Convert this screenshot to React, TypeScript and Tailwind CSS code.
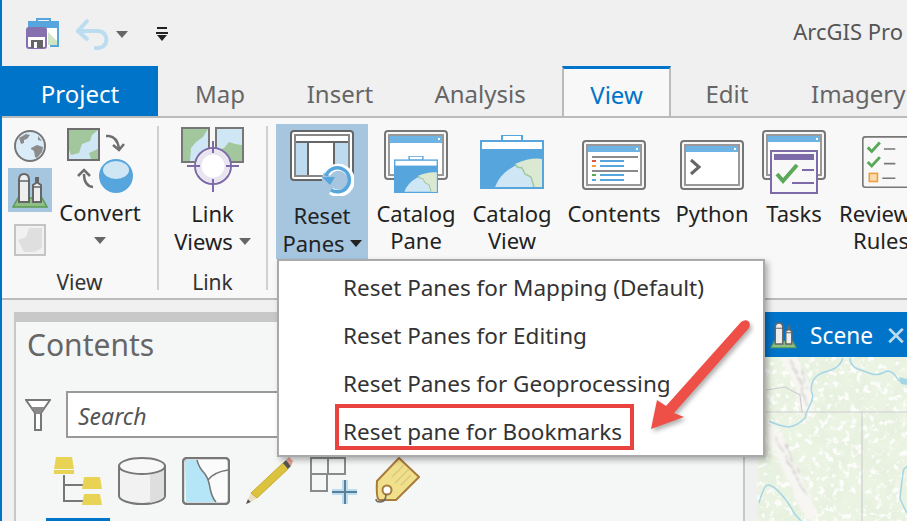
import React from 'react';

const FONT = "font-['Noto_Sans','Open_Sans',sans-serif]";

const tabs = [
  { label: 'Map', w: 'w-[124px]' },
  { label: 'Insert', w: 'w-[116px]' },
  { label: 'Analysis', w: 'w-[164px]' },
];

const menuItems = ['Reset Panes for Mapping (Default)', 'Reset Panes for Editing', 'Reset Panes for Geoprocessing'];

const Caret = ({ className = '' }: { className?: string }) => (
  <svg width="12" height="7" viewBox="0 0 12 7" className={className}>
    <path d="M0 0h12L6 7z" fill="currentColor" />
  </svg>
);

const SaveIcon = () => (
  <svg width="34" height="32" viewBox="0 0 34 32">
    <path d="M2 5h30v24H18z" fill="#fff" />
    <path d="M11 4V1h13v3M2 4h30v24H24" fill="none" stroke="#56a5dc" strokeWidth="2" />
    <path d="M2 5h30v5H2z" fill="#56a5dc" />
    <path d="M22 14l9 9v4h-9z" fill="#cfe6c5" />
    <rect x="1" y="10" width="19" height="20" rx="2" fill="#fff" stroke="#8471ad" strokeWidth="2" />
    <path d="M2 11h17v8H2z" fill="#8471ad" />
    <path d="M5 22h12v8H5z" fill="#666" />
    <path d="M8 24h3v6H8z" fill="#fff" />
  </svg>
);

const UndoIcon = () => (
  <svg width="34" height="32" viewBox="0 0 34 32" fill="none">
    <path d="M2 13h20a8.500 8.500 0 0 1 0 17h-4" stroke="#bcdcf0" strokeWidth="4" />
    <path d="M12 2L2 13l10 9" stroke="#bcdcf0" strokeWidth="4" />
  </svg>
);

const QuickAccess = () => (
  <svg width="12" height="14" viewBox="0 0 12 14">
    <path d="M1 0h10v2H1zM0 5h12v2H0z" fill="#222" />
    <path d="M1 8h10l-5 6z" fill="#222" />
  </svg>
);

const GlobeIcon = () => (
  <svg width="32" height="32" viewBox="0 0 32 32">
    <circle cx="16" cy="16" r="15" fill="#d9ecf8" stroke="#777" strokeWidth="2" />
    <path d="M5 8l7-4 4 1-3 4-3 1v3l-3 1zM17 18l6-3 6 2-1 5-5 6-2-1-1-6-3-2zM24 6l4 5-4-1z" fill="#8c8c8c" />
  </svg>
);

const SceneIcon = ({ size = 36 }: { size?: number }) => (
  <svg width={size} height={size} viewBox="0 0 36 36">
    <path d="M6 26h24l5 9H1z" fill="#8fbf84" stroke="#5b9a52" strokeWidth="1.500" />
    <path d="M7 30V8q0-6 5-6t5 6v22z" fill="#eee" stroke="#666" strokeWidth="2" />
    <path d="M21 30V13l3-2V6h2v5l3 2v17z" fill="#eee" stroke="#666" strokeWidth="2" />
    <path d="M7 9h10M21 15h8" stroke="#666" strokeWidth="1.500" />
  </svg>
);

const FlatMapIcon = () => (
  <svg width="32" height="32" viewBox="0 0 32 32">
    <rect x="1" y="1" width="30" height="30" fill="#f1f1f1" stroke="#c4c4c4" strokeWidth="2" />
    <path d="M4 16l8-3 3-9h13v20l-8 4H10z" fill="#dfdfdf" />
  </svg>
);

const ConvertIcon = () => (
  <svg width="66" height="66" viewBox="0 0 66 66" fill="none">
    <rect x="1" y="1" width="31" height="31" fill="#cfe6f5" stroke="#6e6e6e" strokeWidth="2" />
    <path d="M2 2h29l-6 5-2 6-8 3-3 9-8 2-2-5z" fill="#a3c79c" />
    <path d="M24 31l-2-6 9-4v10z" fill="#a3c79c" />
    <path d="M39 8h3q8 1 10 12M46 17l6 5 5-6" stroke="#6e6e6e" strokeWidth="2.500" />
    <path d="M26 59q-9-1-9-13M11 48l6-6 6 6" stroke="#6e6e6e" strokeWidth="2.500" />
    <ellipse cx="49" cy="48" rx="17" ry="17" fill="#56a5dc" />
    <ellipse cx="49" cy="42" rx="13" ry="9" fill="#cfe6f5" />
  </svg>
);

const LinkIcon = () => (
  <svg width="64" height="66" viewBox="0 0 64 66" fill="none">
    <rect x="1" y="1" width="27" height="34" fill="#cfe6f5" stroke="#777" strokeWidth="2" />
    <path d="M2 2h25l-5 8-7 5-5 6-1 13H2z" fill="#a3c79c" />
    <rect x="35" y="1" width="27" height="34" fill="#cfe6f5" stroke="#777" strokeWidth="2" />
    <path d="M36 34V23l7-2 5-6 6 2 7 1v16z" fill="#a3c79c" />
    <circle cx="32" cy="39" r="18" fill="#fff" stroke="#7d6aa8" strokeWidth="2" />
    <circle cx="32" cy="39" r="14" fill="none" stroke="#e8e4f0" strokeWidth="5" />
    <path d="M32 14v12M32 52v13M6 39h13M45 39h13" stroke="#7d6aa8" strokeWidth="2" />
  </svg>
);

const ResetPanesIcon = () => (
  <svg width="64" height="66" viewBox="0 0 64 66" fill="none">
    <rect x="1" y="1" width="62" height="49" rx="3" fill="#fff" stroke="#666" strokeWidth="2" />
    <rect x="5" y="5" width="54" height="41" fill="#fff" stroke="#888" strokeWidth="2" />
    <path d="M6 13h12v32H6zM44 13h14v32H44z" fill="#bddaef" />
    <path d="M6 12h52M18 13v32M44 13v32" stroke="#666" strokeWidth="2" />
    <circle cx="48" cy="50" r="16" fill="#a6c6e0" />
    <path d="M37 44a13 13 0 1 1 4 17" stroke="#fff" strokeWidth="7" />
    <path d="M36 46a12 12 0 1 1 5 14" stroke="#56a5dc" strokeWidth="3.500" />
    <path d="M32 47h13l-5 8z" fill="#56a5dc" />
  </svg>
);

const Folder = ({ x, y, w, h }: { x: number; y: number; w: number; h: number }) => (
  <svg x={x} y={y} width={w} height={h} viewBox="0 0 64 54" preserveAspectRatio="none">
    <path d="M22 0h20v6H22z" fill="#fff" stroke="#56a5dc" strokeWidth="2" />
    <rect x="0" y="5" width="64" height="49" fill="#56a5dc" />
    <rect x="2" y="7" width="60" height="7" fill="#fff" />
    <path d="M15 52q10-25 47-28v28z" fill="#cfe6f5" />
    <path d="M35 29q16-7 27-5v28h-8q0-8-6-12t-6-8z" fill="#dbe9d2" />
    <path d="M35 29l2 3 5 1 3 6 6 3 3 10" fill="none" stroke="#a3c79c" strokeWidth="1.500" />
  </svg>
);

const CatalogPaneIcon = () => (
  <svg width="64" height="64" viewBox="0 0 64 64">
    <rect x="1" y="1" width="62" height="48" rx="3" fill="#f8f8f8" stroke="#777" strokeWidth="2" />
    <rect x="5" y="5" width="54" height="40" fill="#fff" stroke="#999" strokeWidth="2" />
    <path d="M6 6h52v7H6z" fill="#6db4e4" />
    <path d="M54 8h2v2h-2z" fill="#fff" />
    <Folder x={10} y={26} w={44} h={37} />
  </svg>
);

const CatalogViewIcon = () => (
  <svg width="64" height="54" viewBox="0 0 64 54">
    <Folder x={0} y={0} w={64} h={54} />
  </svg>
);

const AppWindow = ({ children }: { children?: React.ReactNode }) => (
  <svg width="64" height="50" viewBox="0 0 64 50">
    <rect x="1" y="1" width="62" height="48" rx="3" fill="#f8f8f8" stroke="#777" strokeWidth="2" />
    <rect x="5" y="5" width="54" height="40" fill="#fff" stroke="#999" strokeWidth="2" />
    <path d="M6 6h52v6H6z" fill="#6db4e4" />
    <path d="M54 8h2v2h-2z" fill="#fff" />
    {children}
  </svg>
);

const ContentsIcon = () => (
  <AppWindow>
    <path d="M10 17h46M10 31h46" stroke="#666" strokeWidth="1.500" />
    <path d="M10 20h4v2h-4z" fill="#d9583e" />
    <path d="M10 25h4v2h-4z" fill="#ef9f3e" />
    <path d="M10 34h4v2h-4z" fill="#5aa85a" />
    <path d="M10 39h4v2h-4z" fill="#56a5dc" />
    <path d="M18 21h24M18 26h24M18 35h24M18 40h24" stroke="#56a5dc" strokeWidth="2" />
  </AppWindow>
);

const PythonIcon = () => (
  <AppWindow>
    <path d="M11 20l8 7-8 7" fill="none" stroke="#666" strokeWidth="3" />
  </AppWindow>
);

const TasksIcon = () => (
  <svg width="64" height="64" viewBox="0 0 64 64" fill="none">
    <rect x="1" y="1" width="62" height="48" rx="3" fill="#f8f8f8" stroke="#777" strokeWidth="2" />
    <rect x="5" y="5" width="54" height="40" fill="#fff" stroke="#999" strokeWidth="2" />
    <path d="M6 6h52v6H6z" fill="#6db4e4" />
    <path d="M54 8h2v2h-2z" fill="#fff" />
    <rect x="9" y="21" width="46" height="42" fill="#f8f8f8" stroke="#7d6aa8" strokeWidth="2" />
    <path d="M12 24h40v6H12z" fill="#7d6aa8" />
    <path d="M15 44l6 7 14-16" stroke="#5aa85a" strokeWidth="4" />
    <path d="M40 40h12M30 53h22" stroke="#7d6aa8" strokeWidth="2" />
  </svg>
);

const ReviewIcon = () => (
  <svg width="64" height="64" viewBox="0 0 64 64" fill="none">
    <rect x="1" y="1" width="62" height="62" rx="3" fill="#f8f8f8" stroke="#777" strokeWidth="2" />
    <path d="M7 14l5 5 10-11M7 32l5 5 10-11" stroke="#5aa85a" strokeWidth="3.500" />
    <path d="M27 16h14M27 34h14M25 52h16" stroke="#777" strokeWidth="2" />
    <rect x="9" y="46" width="10" height="10" fill="#fbdcb0" stroke="#ef9f3e" strokeWidth="2" />
  </svg>
);

const FilterIcon = () => (
  <svg width="26" height="32" viewBox="0 0 26 32">
    <path d="M1 1h24L16 14v17h-6V14z" fill="#fff" stroke="#777" strokeWidth="2" />
    <path d="M6 8h14l-5 7h-4z" fill="#8a8a8a" />
  </svg>
);

const TreeIcon = () => (
  <svg width="48" height="48" viewBox="0 0 48 48">
    <path d="M10 18v26h20M10 28h20" fill="none" stroke="#777" strokeWidth="2" />
    <path d="M2 0h16l2 12H0zM0 13h20v4H0zM30 20h16l2 12H28zM30 37h16l2 11H28z" fill="#e8d355" />
  </svg>
);

const DatabaseIcon = () => (
  <svg width="48" height="48" viewBox="0 0 48 48">
    <path d="M1 9v30c0 4 10 8 23 8s23-4 23-8V9z" fill="#f2f2f2" stroke="#777" strokeWidth="2" />
    <path d="M32 15l14-4v28q-3 5-14 7z" fill="#dedede" />
    <ellipse cx="24" cy="9" rx="23" ry="8" fill="#f8f8f8" stroke="#777" strokeWidth="2" />
  </svg>
);

const BasemapIcon = () => (
  <svg width="48" height="48" viewBox="0 0 48 48" fill="none">
    <rect x="1" y="1" width="46" height="46" rx="4" fill="#fbfbfb" stroke="#777" strokeWidth="2.500" />
    <path d="M3 3h12q2 8 8 14 4 6 5 14 2 10 6 14H4z" fill="#b4e6f7" />
    <path d="M15 3q2 8 8 14 4 6 5 14 2 10 6 14M26 23q6-8 20-10" stroke="#777" strokeWidth="1.500" />
  </svg>
);

const PencilIcon = () => (
  <svg width="48" height="48" viewBox="0 0 48 48">
    <path d="M0 47l2-5 3 3z" fill="#555" />
    <path d="M2 42l3-6 6 5-6 4z" fill="#eadfc0" />
    <path d="M5 36L37 6l5 6-31 29z" fill="#dcc33f" stroke="#c9ad2c" />
    <path d="M37 6l3-3 5 6-3 3z" fill="#555" />
    <path d="M40 3l3-3 4 4-2 5z" fill="#e8a08f" />
  </svg>
);

const GridAddIcon = () => (
  <svg width="48" height="48" viewBox="0 0 48 48" fill="none">
    <path d="M1 1h34v16H17v17H1zM18 1v16M1 17h17" stroke="#8a8a8a" strokeWidth="2" />
    <path d="M35 23v24M22 35h25" stroke="#bcdcf0" strokeWidth="6" />
    <path d="M35 23v24M22 35h25" stroke="#5a7f99" strokeWidth="2" />
  </svg>
);

const TagIcon = () => (
  <svg width="46" height="48" viewBox="0 0 46 48" fill="none">
    <path d="M3 24L25 1l20 19-23 23-17 0q-3-2-2-19z" fill="#f0e08c" stroke="#a87b3c" strokeWidth="2" />
    <path d="M18 20l12-12M21 26l14-14M27 28l10-10" stroke="#dcc880" strokeWidth="1.500" />
    <circle cx="13" cy="33" r="4.500" fill="#fff" stroke="#a87b3c" strokeWidth="2" />
    <path d="M12 37q0 8-6 8-4 0-4-3" stroke="#666" strokeWidth="1.500" />
  </svg>
);

const RibbonButton = ({ label, icon, className = '' }: { label: React.ReactNode; icon: React.ReactNode; className?: string }) => (
  <div className={`flex flex-col items-center shrink-0 ${className}`}>
    <div className="h-[76px] flex items-center justify-center">{icon}</div>
    <div className="text-center leading-[27px] text-[#222] whitespace-nowrap">{label}</div>
  </div>
);

const GroupLabel = ({ children }: { children: React.ReactNode }) => (
  <div className="absolute left-0 right-0 bottom-[2px] h-[28px] text-center leading-[28px] text-[21px] text-[#333]">{children}</div>
);

const MapPane = () => (
  <svg width="150" height="164" viewBox="0 0 150 164" className="block">
    <defs>
      <filter id="mottle" x="0" y="0" width="100%" height="100%">
        <feTurbulence type="fractalNoise" baseFrequency="0.16" numOctaves="3" seed="11" />
        <feColorMatrix values="0 0 0 0 1  0 0 0 0 1  0 0 0 0 1  0 0 0 6 -3.300" />
      </filter>
      <filter id="greens" x="0" y="0" width="100%" height="100%">
        <feTurbulence type="fractalNoise" baseFrequency="0.035" numOctaves="3" seed="4" />
        <feColorMatrix values="0 0 0 0 0.78  0 0 0 0 0.87  0 0 0 0 0.72  0 0 0 4 -1.900" />
      </filter>
      <filter id="ridge" x="-20%" y="-20%" width="140%" height="140%">
        <feTurbulence type="fractalNoise" baseFrequency="0.12" numOctaves="2" seed="3" result="n" />
        <feDisplacementMap in="SourceGraphic" in2="n" scale="12" />
        <feGaussianBlur stdDeviation="0.800" />
      </filter>
    </defs>
    <rect width="150" height="164" fill="#ebf3e3" />
    <rect width="150" height="164" filter="url(#greens)" opacity="0.6" />
    <rect width="150" height="164" filter="url(#mottle)" opacity="0.9" />
    <g filter="url(#ridge)" fill="none" strokeLinecap="round">
      <path d="M32 2l12 22 6 24M15 76l16 30 22 50" stroke="#f7f6f3" strokeWidth="14" />
      <path d="M34 4l8 18 8 26M43 10l5 20M18 80l14 26 16 30M28 86l14 30" stroke="#c9c6c4" strokeWidth="1.500" strokeDasharray="6 3" />
    </g>
    <path d="M86 1q-3 10-15 13t-15 10-1 12-2 12-5 13q-8 8-16 9-10-1-20-6M93 1q0 8 8 11 8 3 14 5 6 2 15-3 6 0 10 7 3 5 10 5M2 146q5-18 9-18 5 0 12 8 8 8 14 20l7 8M150 109q-4 3-4 7l-3 25q2 6 7 15" fill="none" stroke="#a5d6e6" strokeWidth="1.500" />
    <path d="M142 20l8 2v6l-6-1z" fill="#a5d6e6" />
    <path d="M9 33l19-3 15 8 2 17M9 55h141M105 55v109" fill="none" stroke="#cfcdcf" strokeWidth="1.200" />
  </svg>
);

export default function App() {
  return (
    <div className={`${FONT} relative w-[907px] h-[521px] overflow-hidden flex flex-col bg-[#f0f0f0] border-l-2 border-[#0074c8] text-[22px]`}>
      {/* 标题栏 */}
      <div className="h-[66px] shrink-0 flex items-center pl-[24px] pt-[1px]">
        <SaveIcon />
        <div className="ml-[16px]"><UndoIcon /></div>
        <Caret className="ml-[6px] mt-[2px] text-[#666]" />
        <div className="ml-[28px]"><QuickAccess /></div>
        <div className="ml-auto mr-[4px] text-[22px] text-[#555] whitespace-nowrap leading-none mt-[-6px]">ArcGIS Pro</div>
      </div>

      {/* 选项卡 */}
      <div className="h-[50px] shrink-0 flex items-stretch relative z-[1] text-[24px] text-[#666] whitespace-nowrap overflow-hidden">
        <div className="w-[156px] shrink-0 bg-[#0074c8] text-white flex items-center justify-center pt-[6px]">Project</div>
        {tabs.map((t) => (
          <div key={t.label} className={`${t.w} shrink-0 flex items-center justify-center pt-[6px]`}>{t.label}</div>
        ))}
        <div className="w-[109px] shrink-0 bg-[#f8f8f8] border-x-2 border-t-[3px] border-x-[#bbb] border-t-[#0074c8] text-[#0074c8] flex items-center justify-center pt-[4px]">View</div>
        <div className="w-[112px] shrink-0 flex items-center justify-center pt-[6px]">Edit</div>
        <div className="pl-[28px] shrink-0 flex items-center pt-[6px]">Imagery</div>
      </div>

      {/* 功能区 */}
      <div className="h-[184px] shrink-0 bg-[#f8f8f8] border-y-2 border-[#bbb] flex items-stretch overflow-hidden">
        <div className="relative w-[155px] shrink-0 flex pl-[6px] pt-[6px]">
          <div className="w-[44px] flex flex-col items-center">
            <div className="h-[44px] flex items-center justify-center"><GlobeIcon /></div>
            <div className="w-[44px] h-[44px] bg-[#a6c6e0] flex items-center justify-center"><SceneIcon /></div>
            <div className="h-[42px] mt-[7px] flex items-center justify-center"><FlatMapIcon /></div>
          </div>
          <div className="ml-[6px] w-[84px] flex flex-col items-center">
            <div className="h-[70px] mt-[4px] flex items-start justify-center"><ConvertIcon /></div>
            <div className="leading-[28px] text-[#222]">Convert</div>
            <Caret className="mt-[11px] text-[#666]" />
          </div>
          <GroupLabel>View</GroupLabel>
        </div>
        <div className="w-[2px] shrink-0 my-[8px] bg-[#d0d0d0]" />
        <div className="relative w-[107px] shrink-0 flex flex-col items-center pt-[9px]">
          <LinkIcon />
          <div className="mt-[6px] text-center leading-[28px] text-[#222]">
            Link
            <div className="flex items-center">Views<Caret className="ml-[6px] text-[#666]" /></div>
          </div>
          <GroupLabel>Link</GroupLabel>
        </div>
        <div className="w-[2px] shrink-0 my-[8px] bg-[#d0d0d0]" />
        <div className="ml-[8px] flex items-start pt-[6px]">
          <div className="w-[92px] h-[135px] bg-[#a6c6e0] flex flex-col items-center pt-[6px] shrink-0">
            <ResetPanesIcon />
            <div className="text-center leading-[28px] text-[#222] whitespace-nowrap mt-[5px]">
              Reset
              <div className="flex items-center">Panes<Caret className="ml-[5px] text-[#222]" /></div>
            </div>
          </div>
          <RibbonButton className="w-[96px]" label={<>Catalog<br />Pane</>} icon={<CatalogPaneIcon />} />
          <RibbonButton className="w-[96px]" label={<>Catalog<br />View</>} icon={<CatalogViewIcon />} />
          <RibbonButton className="w-[108px]" label="Contents" icon={<AppWindowWrap><ContentsIcon /></AppWindowWrap>} />
          <RibbonButton className="w-[88px]" label="Python" icon={<AppWindowWrap><PythonIcon /></AppWindowWrap>} />
          <RibbonButton className="w-[76px]" label="Tasks" icon={<TasksIcon />} />
          <div className="ml-[4px] w-[78px] shrink-0 flex flex-col">
            <div className="h-[76px] flex items-center pl-[26px]"><ReviewIcon /></div>
            <div className="text-center leading-[27px] text-[#222] whitespace-nowrap">Review<br /><span className="pl-[12px]">Rules</span></div>
          </div>
        </div>
      </div>

      {/* 主区域 */}
      <div className="flex-1 min-h-0 flex pl-[12px] pt-[12px] gap-[12px]">
        <div className="w-[731px] shrink-0 h-[209px] bg-[#f5f7f7] border-t-[10px] border-x-2 border-[#c8c8c8] overflow-hidden">
          <div className="pl-[11px] pt-[3px] text-[30px] leading-[40px] text-[#666]">Contents</div>
          <div className="flex items-center mt-[26px] pl-[9px]">
            <FilterIcon />
            <div className="ml-[15px] w-[600px] h-[47px] bg-white border-2 border-[#999] flex items-center pl-[10px] pt-[4px] italic text-[#555] text-[23px]">Search</div>
          </div>
          <div className="flex mt-[19px] pl-[38px] gap-[16px] items-start">
            <TreeIcon />
            <DatabaseIcon />
            <BasemapIcon />
            <PencilIcon />
            <GridAddIcon />
            <TagIcon />
          </div>
          <div className="ml-[30px] mt-[13px] w-[64px] h-[3px] bg-[#0074c8]" />
        </div>
        <div className="flex-1 min-w-0 flex flex-col">
          <div className="h-[45px] shrink-0 bg-[#0074c8] text-white flex items-center pl-[13px] whitespace-nowrap text-[22.700px]">
            <SceneIcon size={30} />
            <span className="ml-[13px] pt-[3px]">Scene</span>
            <span className="ml-[12px] text-[#bcdcf0] text-[26px] leading-none">✕</span>
          </div>
          <MapPane />
        </div>
      </div>

      {/* 下拉菜单 */}
      <div className="absolute left-[275px] top-[259px] w-[488px] h-[198px] bg-white border-2 border-[#aaa] shadow-[3px_3px_6px_rgba(0,0,0,0.3)] pt-[3px] text-[#333] text-[22.500px]">
        {menuItems.map((item) => (
          <div key={item} className="h-[48px] pl-[64px] flex items-center whitespace-nowrap">{item}</div>
        ))}
        <div className="relative h-[48px] pl-[64px] flex items-center whitespace-nowrap">
          Reset pane for Bookmarks
          <div className="absolute left-[56px] top-[-4px] w-[299px] h-[46px] border-4 border-[#e8433f]" />
        </div>
      </div>

      {/* 红色箭头 */}
      <svg width="110" height="120" viewBox="0 0 110 120" className="absolute left-[643px] top-[318px] drop-shadow-[2px_3px_2px_rgba(0,0,0,0.3)]">
        <path d="M6 111l6-29 9 6 75-84q4-3 7-1t1 7L29 95l10 4z" fill="#ee4f47" />
      </svg>
    </div>
  );
}

function AppWindowWrap({ children }: { children: React.ReactNode }) {
  return <div className="mt-[6px]">{children}</div>;
}
